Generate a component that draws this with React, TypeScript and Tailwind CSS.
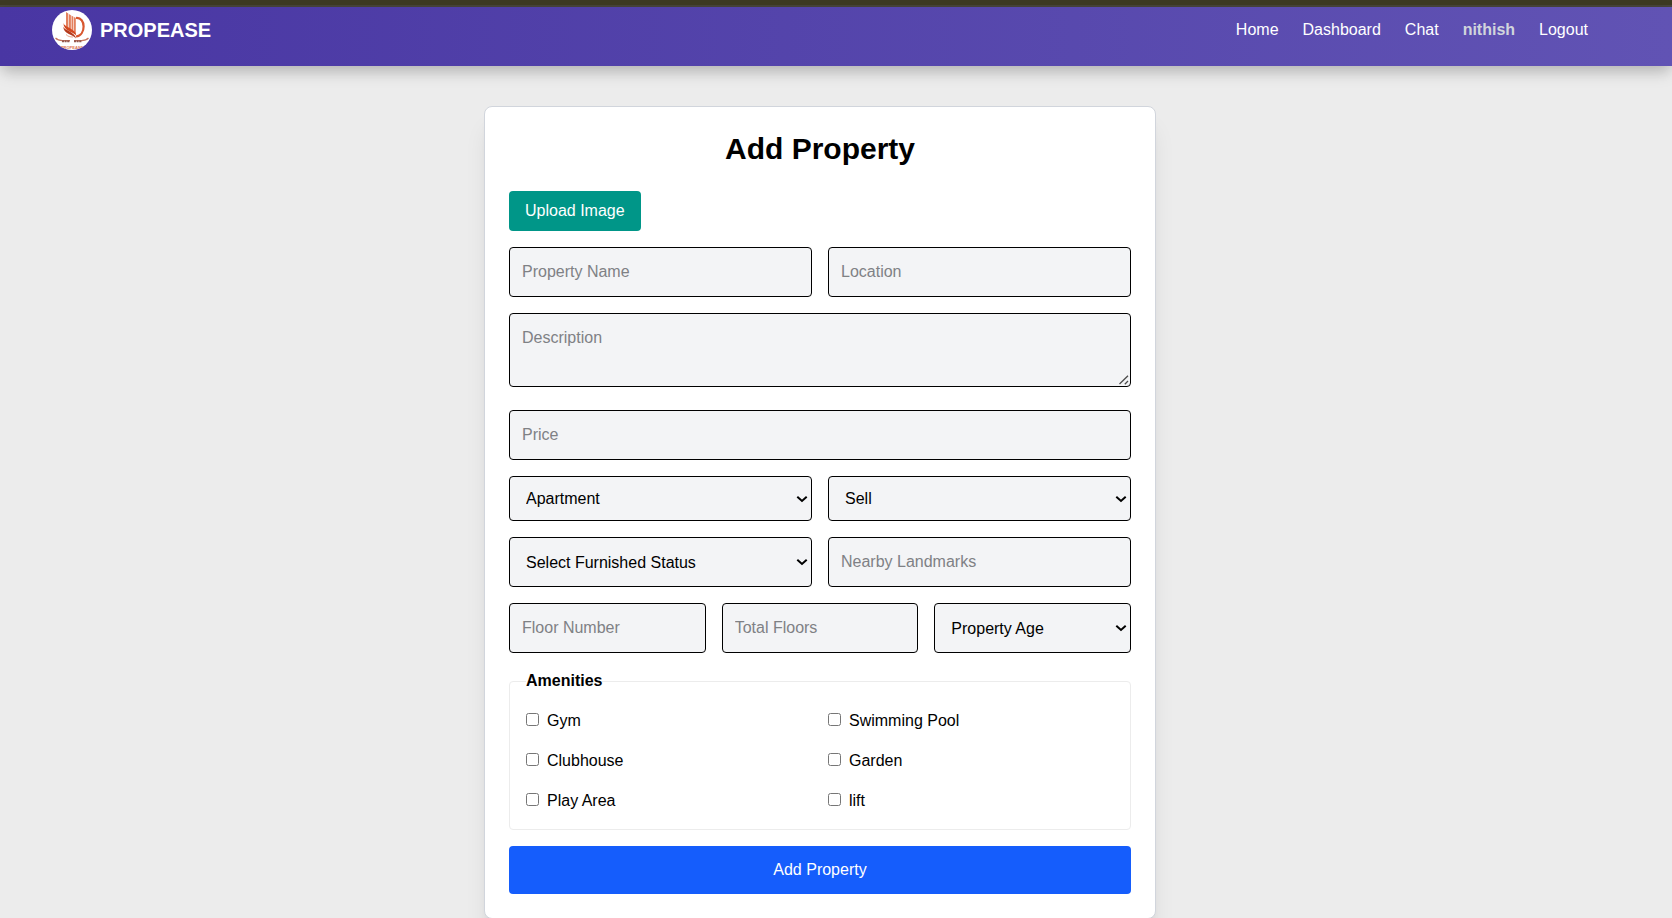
import React from "react";

const base =
  "block w-full min-w-0 rounded-sm border border-black bg-gray-100 text-black focus:outline-2 focus:outline-blue-600";
const field = base + " p-3 placeholder:text-[#7f8185]";
const picker = base + " h-full appearance-none py-3 pr-8 pl-4 leading-[19px]";

const links = ["Home", "Dashboard", "Chat"];

const amenities = ["Gym", "Swimming Pool", "Clubhouse", "Garden", "Play Area", "lift"];

function Logo() {
  return (
    <svg viewBox="0 0 40 40" className="size-10 shrink-0" aria-hidden="true">
      <defs>
        <clipPath id="logo-disc">
          <circle cx="20" cy="20" r="20" />
        </clipPath>
      </defs>
      <circle cx="20" cy="20" r="20" fill="#fff" />
      <g clipPath="url(#logo-disc)">
        <g fill="#e3805e">
          <path d="M14 2l2.300 1.500V18L14 16.500z" />
          <path d="M16.900 4l2 1.200V20l-2-1.200z" />
          <path d="M19.500 5.500l1.900 1.200V22l-1.900-1.200z" />
          <path d="M22 7l1.800 1V24L22 22.800z" />
        </g>
        <path d="M11.500 13c.5 4 12.500 6 12.800 12.500-3.500-4-13-4.500-12.800-12.500z" fill="#d4481f" />
        <path d="M11.300 16.500c1 4 12 5.500 12.700 12-3.500-4.500-12.700-4.500-12.700-12z" fill="#b53a1c" />
        <path d="M24 8c5-.5 7.600 3.500 7.600 8.500s-2.600 9.500-7.600 10" fill="none" stroke="#d8572f" strokeWidth="2.200" />
        <path d="M14 24.500c2 2 4 2.500 7 2.500" fill="none" stroke="#e6a48d" strokeWidth="1" />
        <path d="M3.500 28c2 2.200 4 2.600 7 2.600h7.500M36.500 28c-2 2.200-4 2.600-7 2.600H22" fill="none" stroke="#c67560" strokeWidth="1.200" />
        <path d="M10 31.300h8M22 31.300h8" stroke="#94574c" strokeWidth="2" strokeDasharray="2 .6" />
        <text x="20" y="38.500" textAnchor="middle" fontSize="4" fontWeight="bold" fill="#dc7553" fontFamily="Liberation Sans, sans-serif">
          PROPEASE
        </text>
      </g>
    </svg>
  );
}

function Picker({ label, value }: { label: string; value: string }) {
  return (
    <div className="relative">
      <select className={picker} aria-label={label}>
        <option>{value}</option>
      </select>
      <svg
        viewBox="0 0 12 8"
        className="pointer-events-none absolute inset-y-0 right-1 my-auto h-2 w-3"
        fill="none"
        stroke="#000"
        strokeWidth="2"
        aria-hidden="true"
      >
        <path d="M1.300 1.800L6 6l4.700-4.200" />
      </svg>
    </div>
  );
}

export default function App() {
  return (
    <div className="min-h-screen bg-[#ececec] font-['Liberation_Sans',Arial,sans-serif] text-base text-black">
      <div className="h-[7px] border-b-2 border-[#48453a] bg-[#3d3a23]" />
      <header className="bg-linear-to-r from-[#4936a3] to-[#6153b4] pt-[3px] pr-8 pb-4 shadow-[0_10px_15px_-3px_rgba(0,0,0,0.15),0_4px_12px_rgba(0,0,0,0.1)]">
        <div className="mx-auto flex max-w-[1536px] items-center justify-between">
          <a href="#home" className="flex items-center gap-2 text-xl font-bold text-white">
            <Logo />
            <span>PROPEASE</span>
          </a>
          <nav className="flex items-center gap-6 text-white">
            {links.map((l) => (
              <a key={l} href={"#" + l.toLowerCase()}>
                {l}
              </a>
            ))}
            <span className="font-bold text-gray-300">nithish</span>
            <a href="#logout">Logout</a>
          </nav>
        </div>
      </header>

      <main className="pt-10 pr-8">
        <form
          onSubmit={(e) => e.preventDefault()}
          className="mx-auto flex max-w-2xl flex-col gap-4 rounded-lg border border-gray-300 bg-white p-6 shadow-xl"
        >
          <h1 className="mb-2 text-center text-3xl font-bold">Add Property</h1>
          <button type="button" className="self-start rounded-sm bg-[#009688] px-4 py-2 text-white">
            Upload Image
          </button>

          <div className="grid grid-cols-2 gap-4">
            <input className={field} placeholder="Property Name" aria-label="Property Name" />
            <input className={field} placeholder="Location" aria-label="Location" />
          </div>

          <div className="relative mb-[7px]">
            <textarea
              className={field + " resize-y [&::-webkit-resizer]:bg-transparent"}
              rows={2}
              placeholder="Description"
              aria-label="Description"
            />
            <svg
              viewBox="0 0 10 10"
              className="pointer-events-none absolute right-[2px] bottom-[2px] size-[10px]"
              stroke="#4b4b4b"
              strokeWidth="1.300"
              aria-hidden="true"
            >
              <path d="M.5 9L9 .8M5.800 9.200L9 6" />
            </svg>
          </div>

          <input className={field} placeholder="Price" aria-label="Price" />

          <div className="grid grid-cols-2 gap-4">
            <Picker label="Property type" value="Apartment" />
            <Picker label="Listing type" value="Sell" />
          </div>

          <div className="grid grid-cols-2 gap-4">
            <Picker label="Furnished status" value="Select Furnished Status" />
            <input className={field} placeholder="Nearby Landmarks" aria-label="Nearby Landmarks" />
          </div>

          <div className="grid grid-cols-3 gap-4">
            <input className={field} placeholder="Floor Number" aria-label="Floor Number" />
            <input className={field} placeholder="Total Floors" aria-label="Total Floors" />
            <Picker label="Property age" value="Property Age" />
          </div>

          <fieldset className="rounded-sm border border-[#ececec] p-4">
            <legend className="font-bold">Amenities</legend>
            <div className="grid grid-cols-2 gap-4">
              {amenities.map((a) => (
                <label key={a} className="flex items-baseline gap-2">
                  <input type="checkbox" className="size-[13px]" />
                  {a}
                </label>
              ))}
            </div>
          </fieldset>

          <button type="submit" className="rounded-sm bg-[#155dfc] py-3 text-white">
            Add Property
          </button>
        </form>
      </main>
    </div>
  );
}
